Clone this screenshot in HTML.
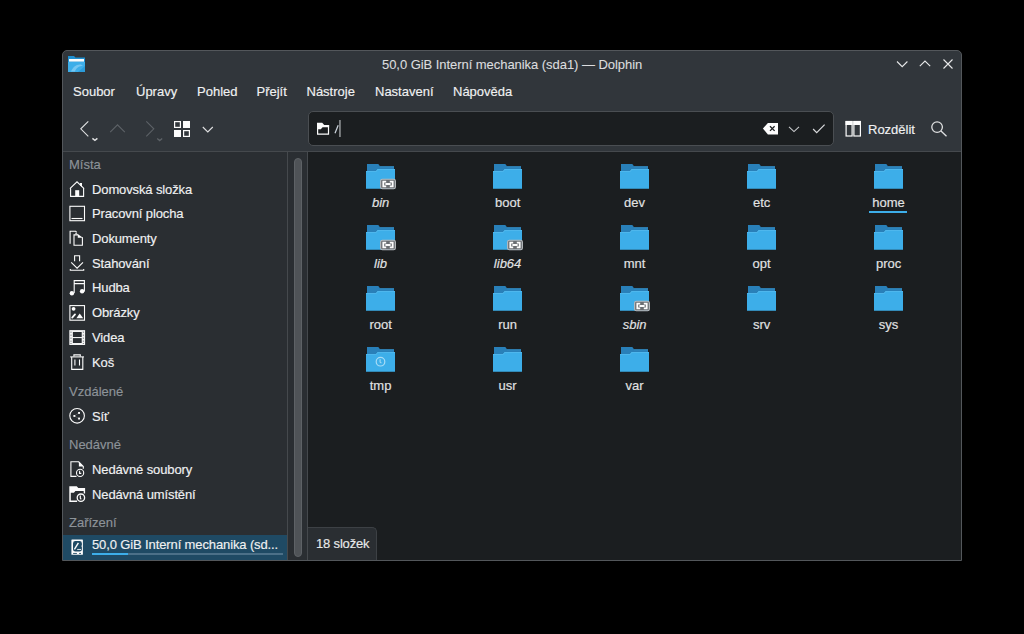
<!DOCTYPE html>
<html><head><meta charset="utf-8">
<style>
*{margin:0;padding:0;box-sizing:border-box}
html,body{width:1024px;height:634px;background:#000;overflow:hidden;font-family:"Liberation Sans",sans-serif;font-size:13px;color:#f0f1f2}
.a{position:absolute}
.t{position:absolute;white-space:nowrap;line-height:15px;height:15px;-webkit-text-stroke:0.15px currentColor}
.h{color:#8d9399}
.c{position:absolute;white-space:nowrap;line-height:15px;height:15px;width:120px;text-align:center;-webkit-text-stroke:0.15px currentColor}
svg{position:absolute;overflow:visible}
</style></head><body>

<div class="a" style="left:62px;top:50px;width:900px;height:511px;background:#31363b;border:1px solid #53575b;border-radius:5px 5px 0 0"></div>
<svg style="left:68px;top:56px" width="17" height="16" viewBox="0 0 17 16">
<path d="M0 0h6l1.5 1.5H17V16H0z" fill="#1f8fd0"/>
<rect x="1" y="3" width="15" height="2.6" fill="#fcfcfc"/>
<path d="M0 6h17v10H0z" fill="#3daee9"/>
<path d="M3 15.5C5 11 8 8 13 8.5L15 10C11 10 8 12 7 15.5z" fill="#8fd0f3" opacity=".7"/>
<path d="M10 16l7-6v6z" fill="#1f8fd0" opacity=".6"/>
</svg>
<div class="t" style="left:382px;top:57px;color:#dcdddf;letter-spacing:-0.05px;-webkit-text-stroke:0.1px #dcdddf">50,0 GiB Interní mechanika (sda1) — Dolphin</div>
<svg style="left:890px;top:54px" width="70" height="20" viewBox="890 54 70 20" fill="none" stroke="#e8e9ea" stroke-width="1.1">
<path d="M897 61.5l5.2 5.2 5.2-5.2"/>
<path d="M919.8 66.2l5.2-5.2 5.2 5.2"/>
<path d="M943.5 59.5l9 9M952.5 59.5l-9 9"/>
</svg>
<div class="t" style="left:73px;top:84px">Soubor</div>
<div class="t" style="left:136px;top:84px">Úpravy</div>
<div class="t" style="left:197px;top:84px">Pohled</div>
<div class="t" style="left:256.5px;top:84px">Přejít</div>
<div class="t" style="left:306.5px;top:84px">Nástroje</div>
<div class="t" style="left:375px;top:84px">Nastavení</div>
<div class="t" style="left:453px;top:84px">Nápověda</div>
<svg style="left:70px;top:110px" width="160" height="36" viewBox="70 110 160 36" fill="none" stroke-width="1.1">
<path d="M88.3 121.3l-7.5 7.5 7.5 7.5" stroke="#dfe0e1"/>
<path d="M92.4 138.4l2.5 2 2.5-2" stroke="#dfe0e1" stroke-width="1.4"/>
<path d="M110.2 132.2l7.3-7.3 7.3 7.3" stroke="#5d6267"/>
<path d="M146.3 121.3l7.5 7.5-7.5 7.5" stroke="#5d6267"/>
<path d="M157.2 138.6l2.5 2 2.5-2" stroke="#5d6267" stroke-width="1.3"/>
<rect x="174.6" y="121.6" width="5.8" height="5.8" stroke="#fcfcfc" stroke-width="1.2"/>
<rect x="183" y="121" width="7" height="7" fill="#fcfcfc" stroke="none"/>
<rect x="174" y="130" width="7" height="7" fill="#fcfcfc" stroke="none"/>
<rect x="183.6" y="130.6" width="5.8" height="5.8" stroke="#fcfcfc" stroke-width="1.2"/>
<path d="M202.8 127l5 5 5-5" stroke="#dfe0e1"/>
</svg>
<div class="a" style="left:308px;top:111px;width:526px;height:35px;background:#1b1e20;border:1px solid #4a4e52;border-radius:5px"></div>
<svg style="left:310px;top:115px" width="530" height="28" viewBox="310 115 530 28" fill="none">
<path d="M317 122.8h5.2l2 2.2h4.9V127.3H322.6l-1.8 1.9H317z" fill="#fcfcfc"/>
<path d="M317.6 123v11.1h10.9V125" stroke="#fcfcfc" stroke-width="1.2"/>
<path d="M335 133.2l3.2-8" stroke="#d0d8e0" stroke-width="1.2"/>
<rect x="339.3" y="120" width="1.3" height="17" fill="#a9acaf"/>
<path d="M762.9 128.6l5-5.7H778v11.5h-10.1z" fill="#fcfcfc"/>
<path d="M770 126.3l4.6 4.6M774.6 126.3l-4.6 4.6" stroke="#1b1e20" stroke-width="1.3"/>
<path d="M789 126.8l5 4.8 5-4.8" stroke="#c8cacc" stroke-width="1.1"/>
<path d="M813.1 129l3.6 3.6 7.9-7.9" stroke="#d8dadc" stroke-width="1.2"/>
</svg>
<svg style="left:840px;top:116px" width="110" height="26" viewBox="840 116 110 26" fill="none">
<path d="M845.5 121h7v4h-7zM853.3 121h7.7v4h-7.7z" fill="#fcfcfc"/>
<rect x="846.1" y="121.5" width="6" height="14.5" stroke="#fcfcfc" stroke-width="1.2"/>
<rect x="853.9" y="121.5" width="6.5" height="14.5" stroke="#fcfcfc" stroke-width="1.2"/>
<circle cx="937.1" cy="127.1" r="5.3" stroke="#dfe0e1" stroke-width="1.3"/>
<path d="M941 131l5.5 5.3" stroke="#dfe0e1" stroke-width="1.3"/>
</svg>
<div class="t" style="left:868px;top:122px">Rozdělit</div>
<div class="a" style="left:63px;top:151px;width:245px;height:409px;background:#2a2e32"></div>
<div class="a" style="left:63px;top:151px;width:898px;height:1px;background:#45494d"></div>
<div class="a" style="left:287px;top:152px;width:1px;height:408px;background:#45494d"></div>
<div class="a" style="left:307px;top:152px;width:1px;height:408px;background:#45494d"></div>
<div class="a" style="left:294px;top:158px;width:8px;height:399px;background:#4f5357;border:1px solid #5e6266;border-radius:4px"></div>
<div class="a" style="left:308px;top:152px;width:653px;height:408px;background:#1b1e20"></div>
<div class="t h" style="left:69px;top:157px">Místa</div>
<div class="t h" style="left:69px;top:384px">Vzdálené</div>
<div class="t h" style="left:69px;top:437px">Nedávné</div>
<div class="t h" style="left:69px;top:515px">Zařízení</div>
<div class="a" style="left:63px;top:535px;width:224px;height:25px;background:#1f4a64"></div>
<div class="t" style="left:92px;top:182px;letter-spacing:-0.12px">Domovská složka</div>
<div class="t" style="left:92px;top:206px;letter-spacing:-0.12px">Pracovní plocha</div>
<div class="t" style="left:92px;top:231px;letter-spacing:-0.12px">Dokumenty</div>
<div class="t" style="left:92px;top:256px;letter-spacing:-0.12px">Stahování</div>
<div class="t" style="left:92px;top:280px;letter-spacing:-0.12px">Hudba</div>
<div class="t" style="left:92px;top:305px;letter-spacing:-0.12px">Obrázky</div>
<div class="t" style="left:92px;top:330px;letter-spacing:-0.12px">Videa</div>
<div class="t" style="left:92px;top:355px;letter-spacing:-0.12px">Koš</div>
<div class="t" style="left:92px;top:409px;letter-spacing:-0.12px">Síť</div>
<div class="t" style="left:92px;top:462px;letter-spacing:-0.12px">Nedávné soubory</div>
<div class="t" style="left:92px;top:487px;letter-spacing:-0.12px">Nedávná umístění</div>
<div class="t" style="left:92px;top:537px;letter-spacing:-0.12px">50,0 GiB Interní mechanika (sd...</div>
<div class="a" style="left:92px;top:553px;width:191px;height:2px;background:#4c7088"></div>
<div class="a" style="left:92px;top:553px;width:36px;height:2px;background:#3daee9"></div>
<svg style="left:69px;top:181px" width="16" height="16" viewBox="0 0 16 16">
<path d="M1.6 7.4V15.4H14.6V7.4M0.9 7.6L8 0.8l7.1 6.8" stroke="#fcfcfc" fill="none" stroke-width="1.1"/>
<rect x="6.2" y="9.2" width="4" height="6" fill="#fcfcfc"/>
<path d="M11 2h2v4.2L11 4.2z" fill="#fcfcfc"/>
</svg>
<svg style="left:69px;top:205px" width="16" height="16" viewBox="0 0 16 16">
<rect x="0.9" y="1.3" width="14.6" height="14.4" stroke="#fcfcfc" fill="none" stroke-width="1.1"/>
<path d="M2.5 13.5h11" stroke="#fcfcfc" fill="none" stroke-width="1.1"/>
</svg>
<svg style="left:69px;top:230px" width="16" height="16" viewBox="0 0 16 16">
<path d="M1.1 13.8V1.2H6.6L7.8 2.4" stroke="#fcfcfc" fill="none" stroke-width="1.1" stroke-width="1.4"/>
<path d="M5 4.9H9.2M5 4.3V15.3H13.4V7.2" stroke="#fcfcfc" fill="none" stroke-width="1.1" stroke-width="1.3"/>
<path d="M6.4 2.4L14.1 7.7H8.8V4.3H6.4z" fill="#fcfcfc"/>
</svg>
<svg style="left:69px;top:255px" width="16" height="16" viewBox="0 0 16 16">
<path d="M5.6 6.2V0.8h5v5.4" stroke="#fcfcfc" fill="none" stroke-width="1.1"/>
<path d="M2.2 7.3l5.9 5.9 5.9-5.9" stroke="#fcfcfc" fill="none" stroke-width="1.1"/>
<path d="M1.3 14v1.3h13.4V14" stroke="#fcfcfc" fill="none" stroke-width="1.1"/>
</svg>
<svg style="left:69px;top:280px" width="17" height="16" viewBox="0 0 17 16">
<path d="M5.2 13V0.6h10.2V11.4M5.2 3.6h10.2" stroke="#fcfcfc" fill="none" stroke-width="1.1"/>
<circle cx="2.9" cy="13.2" r="2.2" fill="#fcfcfc"/>
<circle cx="13.1" cy="11.3" r="2.2" fill="#fcfcfc"/>
</svg>
<svg style="left:69px;top:305px" width="16" height="16" viewBox="0 0 16 16">
<rect x="0.9" y="0.6" width="14.6" height="14.6" stroke="#fcfcfc" fill="none" stroke-width="1.1"/>
<circle cx="4.6" cy="3.8" r="1.9" fill="#fcfcfc"/>
<path d="M3.2 12.6L6 9.4" stroke="#fcfcfc" stroke-width="1.8" stroke-linecap="round"/>
<path d="M7.4 13.2L10.7 8.6l3.5 4.6z" fill="#fcfcfc"/>
</svg>
<svg style="left:69px;top:330px" width="17" height="16" viewBox="0 0 17 16">
<rect x="0.3" y="0.1" width="15.8" height="14.9" fill="#f4f4f4"/>
<rect x="3.9" y="2" width="8.8" height="5" fill="#2a2e32"/>
<rect x="3.9" y="8.1" width="8.8" height="4.9" fill="#2a2e32"/>
<g fill="#8a8e92"><rect x="1.4" y="1.6" width="1.2" height="1.2"/><rect x="1.4" y="4.6" width="1.2" height="1.2"/><rect x="1.4" y="7.6" width="1.2" height="1.2"/><rect x="1.4" y="10.6" width="1.2" height="1.2"/><rect x="1.4" y="13" width="1.2" height="1"/>
<rect x="13.8" y="1.6" width="1.2" height="1.2"/><rect x="13.8" y="4.6" width="1.2" height="1.2"/><rect x="13.8" y="7.6" width="1.2" height="1.2"/><rect x="13.8" y="10.6" width="1.2" height="1.2"/><rect x="13.8" y="13" width="1.2" height="1"/></g>
</svg>
<svg style="left:69px;top:354px" width="16" height="16" viewBox="0 0 16 16">
<path d="M1.2 2.9H15" stroke="#fcfcfc" fill="none" stroke-width="1.1"/>
<path d="M4.9 2.6V0.9h6.4v1.7" stroke="#fcfcfc" fill="none" stroke-width="1.1"/>
<path d="M2.7 3v12.4h11.1V3" stroke="#fcfcfc" fill="none" stroke-width="1.1"/>
<path d="M5.9 5.6v6M10.5 5.6v6" stroke="#fcfcfc" fill="none" stroke-width="1.1"/>
</svg>
<svg style="left:69px;top:408px" width="16" height="16" viewBox="0 0 16 16">
<circle cx="8.1" cy="7.8" r="7.3" stroke="#fcfcfc" fill="none" stroke-width="1.1" stroke-width="1.3"/>
<path d="M5.3 7.9L10 4.9M5.3 7.9L10 10.6" stroke="#fcfcfc" stroke-width=".4" opacity=".5" fill="none"/>
<rect x="4.4" y="7" width="1.9" height="1.9" fill="#fcfcfc"/>
<rect x="9.1" y="4" width="1.9" height="1.9" fill="#fcfcfc"/>
<rect x="9.1" y="9.6" width="1.9" height="1.9" fill="#fcfcfc"/>
</svg>
<svg style="left:69px;top:461px" width="16" height="16" viewBox="0 0 16 16">
<path d="M7.5 15.4H1.9V0.8h7.8l4.6 4.6v2.4" stroke="#fcfcfc" fill="none" stroke-width="1.1" stroke-width="1.3"/>
<path d="M9.9 0.9l4.6 4.6H9.9z" fill="#fcfcfc"/>
<circle cx="11.1" cy="11.9" r="3.6" stroke="#fcfcfc" fill="none" stroke-width="1.1" stroke-width="1.3"/>
<path d="M10.6 9.8v2.6h1.7" stroke="#fcfcfc" fill="none" stroke-width="1.1" stroke-width="1.2"/>
</svg>
<svg style="left:69px;top:486px" width="17" height="17" viewBox="0 0 17 17">
<path d="M0.3 0.3H7.7L9.3 1.9H16.1V7.6H8.1V15.9H0.3z" fill="#fcfcfc"/>
<path d="M1.8 6.7H4.9L6.4 5H14.7V14.5H1.8z" fill="#2a2e32"/>
<circle cx="11.9" cy="11.7" r="3.7" fill="#2a2e32" stroke="#fcfcfc" stroke-width="1.3"/>
<path d="M11.3 9.6v2.5l0.9 1.2" stroke="#fcfcfc" stroke-width="1.2" fill="none"/>
</svg>
<svg style="left:71px;top:539px" width="13" height="17" viewBox="0 0 13 17">
<rect x="0.4" y="0.4" width="11.5" height="15.4" rx="0.6" fill="#fcfcfc"/>
<path d="M4.3 2.1h4.3a2.3 2.3 0 0 1 2.3 2.3v1.8l-0.6 0.9 0.6 0.9v2.2a2.3 2.3 0 0 1-2.3 2.3H4.3A2.3 2.3 0 0 1 2 10.2V4.4A2.3 2.3 0 0 1 4.3 2.1z" fill="#1f4a64"/>
<path d="M3.4 10.3L7.4 3.8" stroke="#fcfcfc" stroke-width="1.4"/>
<path d="M6.2 10.45h3.8" stroke="#fcfcfc" stroke-width="0.9"/>
<path d="M2.1 14.45h3.8M8.1 14.45h1.9" stroke="#1f4a64" stroke-width="0.9"/>
</svg>
<svg style="left:366.1px;top:164px" width="30" height="26" viewBox="0 0 30 26">
<path d="M1 0h11.3l1.7 2.3H28V8H1z" fill="#2980b9"/>
<path d="M14 2.3H28v1H14z" fill="#3e9ad0" opacity=".6"/>
<path d="M0 6.9h10l1.7-1.9H29v19.8H0z" fill="#3daee9"/>
<path d="M0 6.9h10l1.7-1.9H29v0.8H12L10.3 7.7H0z" fill="#5cbff0" opacity=".7"/><rect x="14.6" y="15.2" width="14.8" height="9.6" rx="1.8" fill="#6a6e72" stroke="#b8bbbe" stroke-width="1.1"/>
<path d="M20.2 17.7H17.3V22.3H20.2M23.8 17.7H26.7V22.3H23.8M19.4 20H24.6" stroke="#fcfcfc" stroke-width="1.8" fill="none"/></svg>
<div class="c" style="left:320.6px;top:195px;font-style:italic;color:#e2e3e4">bin</div>
<svg style="left:493.1px;top:164px" width="30" height="26" viewBox="0 0 30 26">
<path d="M1 0h11.3l1.7 2.3H28V8H1z" fill="#2980b9"/>
<path d="M14 2.3H28v1H14z" fill="#3e9ad0" opacity=".6"/>
<path d="M0 6.9h10l1.7-1.9H29v19.8H0z" fill="#3daee9"/>
<path d="M0 6.9h10l1.7-1.9H29v0.8H12L10.3 7.7H0z" fill="#5cbff0" opacity=".7"/></svg>
<div class="c" style="left:447.6px;top:195px;color:#e2e3e4">boot</div>
<svg style="left:620.1px;top:164px" width="30" height="26" viewBox="0 0 30 26">
<path d="M1 0h11.3l1.7 2.3H28V8H1z" fill="#2980b9"/>
<path d="M14 2.3H28v1H14z" fill="#3e9ad0" opacity=".6"/>
<path d="M0 6.9h10l1.7-1.9H29v19.8H0z" fill="#3daee9"/>
<path d="M0 6.9h10l1.7-1.9H29v0.8H12L10.3 7.7H0z" fill="#5cbff0" opacity=".7"/></svg>
<div class="c" style="left:574.6px;top:195px;color:#e2e3e4">dev</div>
<svg style="left:747.1px;top:164px" width="30" height="26" viewBox="0 0 30 26">
<path d="M1 0h11.3l1.7 2.3H28V8H1z" fill="#2980b9"/>
<path d="M14 2.3H28v1H14z" fill="#3e9ad0" opacity=".6"/>
<path d="M0 6.9h10l1.7-1.9H29v19.8H0z" fill="#3daee9"/>
<path d="M0 6.9h10l1.7-1.9H29v0.8H12L10.3 7.7H0z" fill="#5cbff0" opacity=".7"/></svg>
<div class="c" style="left:701.6px;top:195px;color:#e2e3e4">etc</div>
<svg style="left:874.1px;top:164px" width="30" height="26" viewBox="0 0 30 26">
<path d="M1 0h11.3l1.7 2.3H28V8H1z" fill="#2980b9"/>
<path d="M14 2.3H28v1H14z" fill="#3e9ad0" opacity=".6"/>
<path d="M0 6.9h10l1.7-1.9H29v19.8H0z" fill="#3daee9"/>
<path d="M0 6.9h10l1.7-1.9H29v0.8H12L10.3 7.7H0z" fill="#5cbff0" opacity=".7"/></svg>
<div class="c" style="left:828.6px;top:195px;color:#e2e3e4">home</div>
<svg style="left:366.1px;top:225px" width="30" height="26" viewBox="0 0 30 26">
<path d="M1 0h11.3l1.7 2.3H28V8H1z" fill="#2980b9"/>
<path d="M14 2.3H28v1H14z" fill="#3e9ad0" opacity=".6"/>
<path d="M0 6.9h10l1.7-1.9H29v19.8H0z" fill="#3daee9"/>
<path d="M0 6.9h10l1.7-1.9H29v0.8H12L10.3 7.7H0z" fill="#5cbff0" opacity=".7"/><rect x="14.6" y="15.2" width="14.8" height="9.6" rx="1.8" fill="#6a6e72" stroke="#b8bbbe" stroke-width="1.1"/>
<path d="M20.2 17.7H17.3V22.3H20.2M23.8 17.7H26.7V22.3H23.8M19.4 20H24.6" stroke="#fcfcfc" stroke-width="1.8" fill="none"/></svg>
<div class="c" style="left:320.6px;top:256px;font-style:italic;color:#e2e3e4">lib</div>
<svg style="left:493.1px;top:225px" width="30" height="26" viewBox="0 0 30 26">
<path d="M1 0h11.3l1.7 2.3H28V8H1z" fill="#2980b9"/>
<path d="M14 2.3H28v1H14z" fill="#3e9ad0" opacity=".6"/>
<path d="M0 6.9h10l1.7-1.9H29v19.8H0z" fill="#3daee9"/>
<path d="M0 6.9h10l1.7-1.9H29v0.8H12L10.3 7.7H0z" fill="#5cbff0" opacity=".7"/><rect x="14.6" y="15.2" width="14.8" height="9.6" rx="1.8" fill="#6a6e72" stroke="#b8bbbe" stroke-width="1.1"/>
<path d="M20.2 17.7H17.3V22.3H20.2M23.8 17.7H26.7V22.3H23.8M19.4 20H24.6" stroke="#fcfcfc" stroke-width="1.8" fill="none"/></svg>
<div class="c" style="left:447.6px;top:256px;font-style:italic;color:#e2e3e4">lib64</div>
<svg style="left:620.1px;top:225px" width="30" height="26" viewBox="0 0 30 26">
<path d="M1 0h11.3l1.7 2.3H28V8H1z" fill="#2980b9"/>
<path d="M14 2.3H28v1H14z" fill="#3e9ad0" opacity=".6"/>
<path d="M0 6.9h10l1.7-1.9H29v19.8H0z" fill="#3daee9"/>
<path d="M0 6.9h10l1.7-1.9H29v0.8H12L10.3 7.7H0z" fill="#5cbff0" opacity=".7"/></svg>
<div class="c" style="left:574.6px;top:256px;color:#e2e3e4">mnt</div>
<svg style="left:747.1px;top:225px" width="30" height="26" viewBox="0 0 30 26">
<path d="M1 0h11.3l1.7 2.3H28V8H1z" fill="#2980b9"/>
<path d="M14 2.3H28v1H14z" fill="#3e9ad0" opacity=".6"/>
<path d="M0 6.9h10l1.7-1.9H29v19.8H0z" fill="#3daee9"/>
<path d="M0 6.9h10l1.7-1.9H29v0.8H12L10.3 7.7H0z" fill="#5cbff0" opacity=".7"/></svg>
<div class="c" style="left:701.6px;top:256px;color:#e2e3e4">opt</div>
<svg style="left:874.1px;top:225px" width="30" height="26" viewBox="0 0 30 26">
<path d="M1 0h11.3l1.7 2.3H28V8H1z" fill="#2980b9"/>
<path d="M14 2.3H28v1H14z" fill="#3e9ad0" opacity=".6"/>
<path d="M0 6.9h10l1.7-1.9H29v19.8H0z" fill="#3daee9"/>
<path d="M0 6.9h10l1.7-1.9H29v0.8H12L10.3 7.7H0z" fill="#5cbff0" opacity=".7"/></svg>
<div class="c" style="left:828.6px;top:256px;color:#e2e3e4">proc</div>
<svg style="left:366.1px;top:286px" width="30" height="26" viewBox="0 0 30 26">
<path d="M1 0h11.3l1.7 2.3H28V8H1z" fill="#2980b9"/>
<path d="M14 2.3H28v1H14z" fill="#3e9ad0" opacity=".6"/>
<path d="M0 6.9h10l1.7-1.9H29v19.8H0z" fill="#3daee9"/>
<path d="M0 6.9h10l1.7-1.9H29v0.8H12L10.3 7.7H0z" fill="#5cbff0" opacity=".7"/></svg>
<div class="c" style="left:320.6px;top:317px;color:#e2e3e4">root</div>
<svg style="left:493.1px;top:286px" width="30" height="26" viewBox="0 0 30 26">
<path d="M1 0h11.3l1.7 2.3H28V8H1z" fill="#2980b9"/>
<path d="M14 2.3H28v1H14z" fill="#3e9ad0" opacity=".6"/>
<path d="M0 6.9h10l1.7-1.9H29v19.8H0z" fill="#3daee9"/>
<path d="M0 6.9h10l1.7-1.9H29v0.8H12L10.3 7.7H0z" fill="#5cbff0" opacity=".7"/></svg>
<div class="c" style="left:447.6px;top:317px;color:#e2e3e4">run</div>
<svg style="left:620.1px;top:286px" width="30" height="26" viewBox="0 0 30 26">
<path d="M1 0h11.3l1.7 2.3H28V8H1z" fill="#2980b9"/>
<path d="M14 2.3H28v1H14z" fill="#3e9ad0" opacity=".6"/>
<path d="M0 6.9h10l1.7-1.9H29v19.8H0z" fill="#3daee9"/>
<path d="M0 6.9h10l1.7-1.9H29v0.8H12L10.3 7.7H0z" fill="#5cbff0" opacity=".7"/><rect x="14.6" y="15.2" width="14.8" height="9.6" rx="1.8" fill="#6a6e72" stroke="#b8bbbe" stroke-width="1.1"/>
<path d="M20.2 17.7H17.3V22.3H20.2M23.8 17.7H26.7V22.3H23.8M19.4 20H24.6" stroke="#fcfcfc" stroke-width="1.8" fill="none"/></svg>
<div class="c" style="left:574.6px;top:317px;font-style:italic;color:#e2e3e4">sbin</div>
<svg style="left:747.1px;top:286px" width="30" height="26" viewBox="0 0 30 26">
<path d="M1 0h11.3l1.7 2.3H28V8H1z" fill="#2980b9"/>
<path d="M14 2.3H28v1H14z" fill="#3e9ad0" opacity=".6"/>
<path d="M0 6.9h10l1.7-1.9H29v19.8H0z" fill="#3daee9"/>
<path d="M0 6.9h10l1.7-1.9H29v0.8H12L10.3 7.7H0z" fill="#5cbff0" opacity=".7"/></svg>
<div class="c" style="left:701.6px;top:317px;color:#e2e3e4">srv</div>
<svg style="left:874.1px;top:286px" width="30" height="26" viewBox="0 0 30 26">
<path d="M1 0h11.3l1.7 2.3H28V8H1z" fill="#2980b9"/>
<path d="M14 2.3H28v1H14z" fill="#3e9ad0" opacity=".6"/>
<path d="M0 6.9h10l1.7-1.9H29v19.8H0z" fill="#3daee9"/>
<path d="M0 6.9h10l1.7-1.9H29v0.8H12L10.3 7.7H0z" fill="#5cbff0" opacity=".7"/></svg>
<div class="c" style="left:828.6px;top:317px;color:#e2e3e4">sys</div>
<svg style="left:366.1px;top:347px" width="30" height="26" viewBox="0 0 30 26">
<path d="M1 0h11.3l1.7 2.3H28V8H1z" fill="#2980b9"/>
<path d="M14 2.3H28v1H14z" fill="#3e9ad0" opacity=".6"/>
<path d="M0 6.9h10l1.7-1.9H29v19.8H0z" fill="#3daee9"/>
<path d="M0 6.9h10l1.7-1.9H29v0.8H12L10.3 7.7H0z" fill="#5cbff0" opacity=".7"/><circle cx="14.5" cy="14.7" r="4.3" fill="none" stroke="#a8dcf6" stroke-width="1.2"/>
<path d="M14.1 12.3v2.8l1.3 1.1" fill="none" stroke="#a8dcf6" stroke-width="1.1"/></svg>
<div class="c" style="left:320.6px;top:378px;color:#e2e3e4">tmp</div>
<svg style="left:493.1px;top:347px" width="30" height="26" viewBox="0 0 30 26">
<path d="M1 0h11.3l1.7 2.3H28V8H1z" fill="#2980b9"/>
<path d="M14 2.3H28v1H14z" fill="#3e9ad0" opacity=".6"/>
<path d="M0 6.9h10l1.7-1.9H29v19.8H0z" fill="#3daee9"/>
<path d="M0 6.9h10l1.7-1.9H29v0.8H12L10.3 7.7H0z" fill="#5cbff0" opacity=".7"/></svg>
<div class="c" style="left:447.6px;top:378px;color:#e2e3e4">usr</div>
<svg style="left:620.1px;top:347px" width="30" height="26" viewBox="0 0 30 26">
<path d="M1 0h11.3l1.7 2.3H28V8H1z" fill="#2980b9"/>
<path d="M14 2.3H28v1H14z" fill="#3e9ad0" opacity=".6"/>
<path d="M0 6.9h10l1.7-1.9H29v19.8H0z" fill="#3daee9"/>
<path d="M0 6.9h10l1.7-1.9H29v0.8H12L10.3 7.7H0z" fill="#5cbff0" opacity=".7"/></svg>
<div class="c" style="left:574.6px;top:378px;color:#e2e3e4">var</div>
<div class="a" style="left:869px;top:211px;width:38px;height:2px;background:#3daee9"></div>
<div class="a" style="left:308px;top:527px;width:69px;height:33px;background:#2a2e32;border:1px solid #3d4145;border-left:none;border-bottom:none;border-radius:0 5px 0 0"></div>
<div class="t" style="left:316px;top:536px;color:#e8e9ea;letter-spacing:-0.17px">18 složek</div>
</body></html>
